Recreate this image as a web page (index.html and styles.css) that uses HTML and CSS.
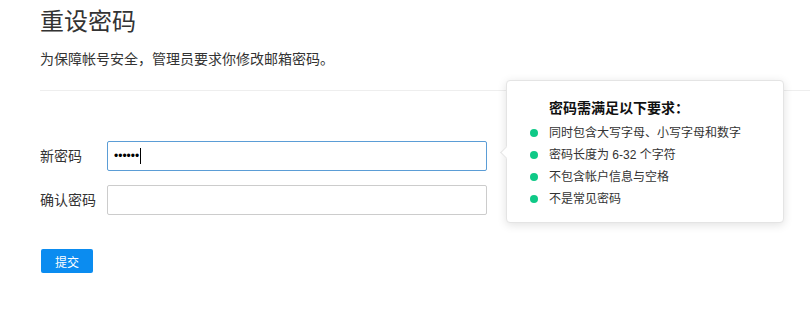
FILE: index.html
```html
<!DOCTYPE html>
<html lang="zh-CN">
<head>
    <meta charset="UTF-8">
    <meta name="viewport" content="width=device-width, initial-scale=1.0">
    <title>重设密码</title>
    <link rel="stylesheet" href="styles.css">
</head>
<body>
    <div class="page">
        <div class="header">
            <h1 class="title">重设密码</h1>
            <p class="desc">为保障帐号安全，管理员要求你修改邮箱密码。</p>
        </div>

        <form class="form">
            <div class="row">
                <label class="label">新密码</label>
                <div class="field focus"><span class="dots">••••••</span><span class="caret"></span></div>
            </div>
            <div class="row">
                <label class="label">确认密码</label>
                <div class="field"></div>
            </div>
            <div class="actions">
                <button type="button" class="btn">提交</button>
            </div>
        </form>

        <div class="tip">
            <div class="tip-title">密码需满足以下要求：</div>
            <ul class="tip-list">
                <li>同时包含大写字母、小写字母和数字</li>
                <li>密码长度为 6-32 个字符</li>
                <li>不包含帐户信息与空格</li>
                <li>不是常见密码</li>
            </ul>
        </div>
    </div>
</body>
</html>
```

FILE: styles.css
```css
body {
    margin: 0;
    font-family: "Liberation Sans", "Noto Sans CJK SC", sans-serif;
    color: #333;
    background: #fff;
}
.page {
    position: relative;
    height: 309px;
}
.header {
    margin: 0 0 1px 40px;
    padding-top: 6px;
    height: 91px;
    box-sizing: border-box;
    border-bottom: 1px solid #eee;
}
.title {
    margin: 0;
    font-size: 24px;
    line-height: 32px;
    font-weight: normal;
}
.desc {
    margin: 11px 0 0;
    font-size: 14px;
    line-height: 20px;
}
.form {
    padding: 49px 0 0 40px;
}
.row {
    display: flex;
    align-items: center;
    margin-bottom: 14px;
}
.label {
    width: 67px;
    font-size: 14px;
    line-height: 20px;
}
.field {
    width: 380px;
    height: 30px;
    box-sizing: border-box;
    border: 1px solid #ccc;
    border-radius: 2px;
    display: flex;
    align-items: center;
    padding-left: 6px;
}
.field.focus {
    border-color: #5b9dd6;
}
.dots {
    font-size: 12px;
    color: #000;
}
.caret {
    display: inline-block;
    width: 1px;
    height: 16px;
    background: #000;
    margin-left: 1px;
}
.actions {
    padding-top: 20px;
}
.btn {
    margin: 0 0 0 1px;
    width: 52px;
    height: 24px;
    padding: 0;
    border: none;
    border-radius: 2px;
    background: #0b8cf0;
    color: #fff;
    font-family: inherit;
    font-size: 12px;
    cursor: pointer;
}
.tip {
    position: absolute;
    left: 506px;
    top: 80px;
    width: 278px;
    height: 143px;
    box-sizing: border-box;
    padding: 16px 0 0 42px;
    background: #fff;
    border: 1px solid #e4e4e4;
    border-radius: 4px;
    box-shadow: 0 2px 10px rgba(0, 0, 0, 0.12);
}
.tip::before {
    content: "";
    position: absolute;
    left: -5px;
    top: 67px;
    width: 8px;
    height: 8px;
    background: #fff;
    border-left: 1px solid #e4e4e4;
    border-bottom: 1px solid #e4e4e4;
    transform: rotate(45deg);
}
.tip-title {
    font-size: 14px;
    font-weight: bold;
    line-height: 22px;
    color: #111;
    margin-bottom: 3px;
}
.tip-list {
    list-style: none;
    margin: 0;
    padding: 0;
}
.tip-list li {
    position: relative;
    font-size: 12px;
    line-height: 22px;
    color: #333;
}
.tip-list li::before {
    content: "";
    position: absolute;
    left: -19px;
    top: 7px;
    width: 8px;
    height: 8px;
    border-radius: 50%;
    background: #0fc987;
}
```
